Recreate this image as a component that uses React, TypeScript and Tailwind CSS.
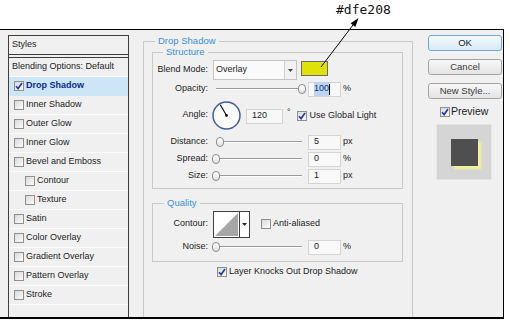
import type { ReactNode } from 'react'

const styleRows = [
  { label: 'Drop Shadow', checked: true, active: true },
  { label: 'Inner Shadow' },
  { label: 'Outer Glow' },
  { label: 'Inner Glow' },
  { label: 'Bevel and Emboss' },
  { label: 'Contour', indent: true },
  { label: 'Texture', indent: true },
  { label: 'Satin' },
  { label: 'Color Overlay' },
  { label: 'Gradient Overlay' },
  { label: 'Pattern Overlay' },
  { label: 'Stroke' },
] as { label: string; checked?: boolean; active?: boolean; indent?: boolean }[]

function Check({ checked = false }: { checked?: boolean }) {
  return (
    <span className="flex h-[10px] w-[10px] shrink-0 items-center justify-center border border-[#8e8f8f] bg-linear-to-br from-[#d9d9d9] to-[#fcfcfc]">
      {checked && (
        <svg viewBox="0 0 8 8" className="h-[8px] w-[8px]">
          <path d="M1 4.3 L3.1 6.6 L7 1" fill="none" stroke="#2140a6" strokeWidth="1.7" />
        </svg>
      )}
    </span>
  )
}

function Legend({ children, className }: { children: ReactNode; className: string }) {
  return (
    <div className={`-mt-[7px] h-[12px] w-fit bg-[#f0f0f0] px-[3px] text-[9.5px] leading-[12px] text-[#3b91d1] ${className}`}>
      {children}
    </div>
  )
}

function Label({ children }: { children: ReactNode }) {
  return <div className="w-[55px] shrink-0 text-right">{children}</div>
}

function Slider({ at }: { at: number }) {
  // at = thumb centre from the slider's left edge
  return (
    <div className="relative ml-[3px] h-[10px] w-[96px]">
      <div className="absolute left-[5px] right-[5px] top-[4px] h-[2px] border-t border-[#9a9a9a] bg-white" />
      <div
        className="absolute top-0 h-[10px] w-[8px] rounded-full border border-[#8c8c8c] bg-linear-to-b from-white to-[#e2e2e2]"
        style={{ left: at - 4 }}
      />
    </div>
  )
}

function Field({ value, selected = false, className = 'w-[33px]' }: { value: string; selected?: boolean; className?: string }) {
  return (
    <div className={`flex h-[15px] items-center border border-[#d4d4d4] bg-[#f8f8f8] pl-[5px] ${className}`}>
      {selected ? (
        <>
          <span className="bg-[#bcd4f0] text-[#14327d]">{value}</span>
          <span className="h-[11px] w-px bg-black" />
        </>
      ) : (
        value
      )}
    </div>
  )
}

function SliderRow({ label, at, value, unit, selected, className }: { label: string; at: number; value: string; unit: string; selected?: boolean; className: string }) {
  return (
    <div className={`flex h-[16px] items-center ${className}`}>
      <Label>{label}</Label>
      <Slider at={at} />
      <div className="ml-px">
        <Field value={value} selected={selected} />
      </div>
      <span className="ml-[2px]">{unit}</span>
    </div>
  )
}

function StylesList() {
  return (
    <div className="ml-[8px] mt-[5px] flex w-[121px] flex-col border-x border-t border-[#3d3d3d]">
      <div className="flex h-[19px] items-center border-b border-[#3d3d3d] pl-[3px]">Styles</div>
      <div className="mt-[2px] flex h-[20px] items-center border-y border-t-[#3d3d3d] border-b-[#fbfbfb] pl-[3px]">
        Blending Options: Default
      </div>
      {styleRows.map((r) => (
        <div
          key={r.label}
          className={`flex h-[19px] items-center gap-[2px] border-b ${r.active ? 'border-[#cfe6f5] bg-[#cde6f7] font-bold text-[#0d2a86]' : 'border-[#fbfbfb]'} ${r.indent ? 'pl-[16px]' : 'pl-[5px]'}`}
        >
          <Check checked={r.checked} />
          <span>{r.label}</span>
        </div>
      ))}
    </div>
  )
}

function AngleDial() {
  return (
    <svg viewBox="0 0 29 29" className="ml-[4px] h-[29px] w-[29px]">
      <circle cx="14.5" cy="14.5" r="13.5" fill="#fbfbfb" stroke="#3f5f93" strokeWidth="1.5" />
      <line x1="14.5" y1="14.5" x2="8.3" y2="3.8" stroke="#111" strokeWidth="1.2" />
      <circle cx="14.5" cy="14.5" r="1.4" fill="#111" />
    </svg>
  )
}

function DropShadowPanel() {
  return (
    <div className="ml-[14px] mt-[11px] flex w-[270px] flex-col border-x border-t border-[#c9c9c9]">
      <Legend className="ml-[11px]">Drop Shadow</Legend>

      <div className="ml-[8px] mt-[5px] flex w-[251px] flex-col border border-[#c9c9c9] pb-[4px]">
        <Legend className="ml-[10px]">Structure</Legend>

        <div className="mt-[2px] flex h-[20px] items-center">
          <Label>Blend Mode:</Label>
          <div className="ml-[5px] flex h-[20px] w-[84px] border border-[#c4c4c4] bg-[#fafafa]">
            <span className="flex flex-1 items-center pl-[2px]">Overlay</span>
            <span className="flex w-[12px] items-center justify-center border-l border-[#cfcfcf] bg-[#f1f1f1]">
              <svg viewBox="0 0 5 3" className="h-[3px] w-[5px]">
                <path d="M0 0 H5 L2.5 3 Z" fill="#444" />
              </svg>
            </span>
          </div>
          <div className="ml-[4px] h-[15px] w-[27px] self-start border border-[#6b6b6b] bg-[#dfe208] mt-px" />
        </div>

        <SliderRow className="mt-px" label="Opacity:" at={91} value="100" unit="%" selected />

        <div className="mt-[4px] flex h-[28px] items-center">
          <Label>Angle:</Label>
          <AngleDial />
          <div className="ml-[5px] mt-[2px]">
            <Field value="120" className="w-[37px]" />
          </div>
          <span className="ml-[4px] self-start mt-[5px]">°</span>
          <div className="ml-[6px] mt-[2px] flex items-center gap-[3px]">
            <Check checked />
            <span>Use Global Light</span>
          </div>
        </div>

        <SliderRow className="mt-[5px]" label="Distance:" at={9} value="5" unit="px" />
        <SliderRow className="mt-px" label="Spread:" at={5} value="0" unit="%" />
        <SliderRow className="mt-px" label="Size:" at={5} value="1" unit="px" />
      </div>

      <div className="ml-[8px] mt-[14px] flex w-[251px] flex-col border border-[#c9c9c9] pb-[6px]">
        <Legend className="ml-[11px]">Quality</Legend>

        <div className="mt-[2px] flex h-[26px] items-center">
          <Label>Contour:</Label>
          <div className="ml-[5px] flex h-[27px] w-[37px] border border-[#3f3f3f] bg-white">
            <svg viewBox="0 0 25 25" className="h-[25px] w-[25px]">
              <rect x="0" y="0" width="25" height="25" fill="#fff" />
              <path d="M1 24 L24 1 L24 24 Z" fill="#a6a6a6" />
            </svg>
            <span className="flex w-[10px] items-center justify-center border-l border-[#3f3f3f]">
              <svg viewBox="0 0 5 3" className="h-[3px] w-[5px]">
                <path d="M0 0 H5 L2.5 3 Z" fill="#222" />
              </svg>
            </span>
          </div>
          <div className="ml-[11px] flex items-center gap-[2px]">
            <Check />
            <span>Anti-aliased</span>
          </div>
        </div>

        <SliderRow className="mt-[2px]" label="Noise:" at={5} value="0" unit="%" />
      </div>

      <div className="ml-[73px] mt-[4px] flex h-[12px] items-center gap-[2px]">
        <Check checked />
        <span>Layer Knocks Out Drop Shadow</span>
      </div>
    </div>
  )
}

function Button({ children, primary = false, className }: { children: ReactNode; primary?: boolean; className: string }) {
  return (
    <div
      className={`flex h-[16px] w-[74px] items-center justify-center rounded-[3px] border text-[9.5px] ${
        primary
          ? 'border-[#6fa9d3] bg-linear-to-b from-[#f3f9fd] to-[#d9eaf6] text-[#1a1a1a]'
          : 'border-[#a3a3a3] bg-linear-to-b from-[#f8f8f8] to-[#e3e3e3] text-[#3a3a3a]'
      } ${className}`}
    >
      {children}
    </div>
  )
}

function SidePanel() {
  return (
    <div className="ml-[15px] flex w-[74px] flex-col">
      <Button primary className="mt-[5px]">OK</Button>
      <Button className="mt-[8px]">Cancel</Button>
      <Button className="mt-[8px]">New Style...</Button>
      <div className="ml-[12px] mt-[7px] flex h-[12px] items-center gap-px text-[10.5px]">
        <Check checked />
        <span>Preview</span>
      </div>
      <div className="ml-[8px] mt-[6px] h-[56px] w-[56px] border border-[#e4e4e4] bg-[#d5d5d5] pl-[14px] pt-[14px]">
        <div className="h-[27px] w-[27px] bg-[#4f4f4f] shadow-[3px_3px_2px_#f3f39a]" />
      </div>
    </div>
  )
}

export default function App() {
  return (
    <div className="relative h-[322px] w-[510px] overflow-hidden bg-white font-['Liberation_Sans',Arial,sans-serif] text-[9px] text-[#1c1c1c]">
      <div className="mt-[29px] flex h-[290px] w-[504px] border-b-2 border-r border-t border-black bg-[#f0f0f0]">
        <StylesList />
        <DropShadowPanel />
        <SidePanel />
      </div>

      {/* colour callout drawn over the dialog */}
      <div className="absolute left-[336px] top-[2px] font-['DejaVu_Sans_Mono',monospace] text-[13px] leading-[16px] text-[#111]">
        #dfe208
      </div>
      <svg className="pointer-events-none absolute left-0 top-0 h-[322px] w-[510px]" viewBox="0 0 510 322">
        <line x1="321" y1="67" x2="353" y2="25" stroke="#000" strokeWidth="1" />
        <path d="M358.5 18 L355.3 26.9 L350.6 23.2 Z" fill="#000" />
      </svg>
    </div>
  )
}
